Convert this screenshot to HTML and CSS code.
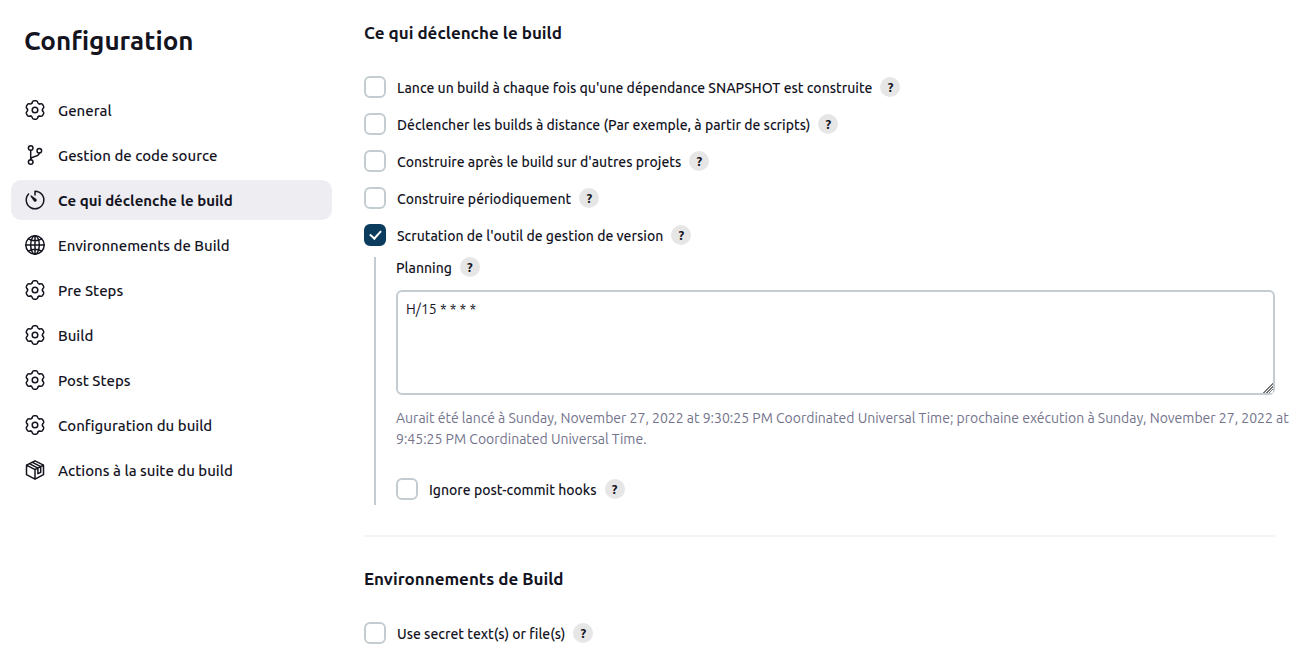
FILE: index.html
```
<!DOCTYPE html>
<html lang="fr">
<head>
<meta charset="utf-8">
<meta name="viewport" content="width=device-width, initial-scale=1">
<title>Configuration</title>
<link rel="stylesheet" href="styles.css">
</head>
<body>
<svg class="sprite" aria-hidden="true">
  <defs>
    <path id="tooth" d="M-3-7Q-2.4-9.3-1.2-9.3H1.2Q2.4-9.3 3-7Q3.45-5.98 4.56-6.1"/>
    <symbol id="gear" viewBox="-12 -12 24 24">
      <use href="#tooth"/>
      <use href="#tooth" transform="rotate(60)"/>
      <use href="#tooth" transform="rotate(120)"/>
      <use href="#tooth" transform="rotate(180)"/>
      <use href="#tooth" transform="rotate(240)"/>
      <use href="#tooth" transform="rotate(300)"/>
      <circle r="2.8"/>
    </symbol>
    <symbol id="branch" viewBox="0 0 24 24">
      <circle cx="7.7" cy="5" r="2.3"/><circle cx="7.7" cy="19" r="2.3"/><circle cx="16.3" cy="7.7" r="2.3"/>
      <path d="M7.7 7.3v9.4M16.3 10c0 4.6-8.600 2.600-8.600 6.700"/>
    </symbol>
    <symbol id="timer" viewBox="0 0 24 24">
      <path d="M12 7V3.200a8.800 8.800 0 1 1-6.400 2.800"/>
      <path class="solid" d="M8 7.300l5.300 3.600a1.600 1.600 0 1 1-2.400 2.300L7.300 8z"/>
    </symbol>
    <symbol id="globe" viewBox="0 0 24 24">
      <circle cx="12" cy="12" r="9.200"/><ellipse cx="12" cy="12" rx="4.300" ry="9.200"/>
      <path d="M12 2.800v18.400M2.800 12h18.400M5.500 5.900c3.500 2.400 9.500 2.400 13 0M5.500 18.100c3.500-2.400 9.500-2.400 13 0"/>
    </symbol>
    <symbol id="package" viewBox="0 0 24 24">
      <path d="M12 2.800l8.500 4.300v9.600L12 21.200l-8.500-4.500V7.100zM3.500 7.100l8.500 4.500 8.500-4.500M12 11.600v9.600M6.300 5.700l8.600 4.500v5.500l2.800-1.400V8.700L9.100 4.200"/>
    </symbol>
  </defs>
</svg>
<div class="page">
  <aside class="sidebar">
    <h1 class="sidebar-title">Configuration</h1>
    <nav class="nav">
      <a class="nav-link" href="#general"><svg class="icon"><use href="#gear"/></svg><span class="nav-text">General</span></a>
      <a class="nav-link" href="#scm"><svg class="icon"><use href="#branch"/></svg><span class="nav-text">Gestion de code source</span></a>
      <a class="nav-link nav-link-active" href="#triggers" aria-current="true"><svg class="icon"><use href="#timer"/></svg><span class="nav-text">Ce qui déclenche le build</span></a>
      <a class="nav-link" href="#environment"><svg class="icon"><use href="#globe"/></svg><span class="nav-text">Environnements de Build</span></a>
      <a class="nav-link" href="#pre-steps"><svg class="icon"><use href="#gear"/></svg><span class="nav-text">Pre Steps</span></a>
      <a class="nav-link" href="#build"><svg class="icon"><use href="#gear"/></svg><span class="nav-text">Build</span></a>
      <a class="nav-link" href="#post-steps"><svg class="icon"><use href="#gear"/></svg><span class="nav-text">Post Steps</span></a>
      <a class="nav-link" href="#build-config"><svg class="icon"><use href="#gear"/></svg><span class="nav-text">Configuration du build</span></a>
      <a class="nav-link" href="#post-build"><svg class="icon"><use href="#package"/></svg><span class="nav-text">Actions à la suite du build</span></a>
    </nav>
  </aside>
  <main class="main">
    <section class="section" id="triggers">
      <h2 class="section-title">Ce qui déclenche le build</h2>
      <div class="options">
        <div class="option"><input class="checkbox" type="checkbox" id="snapshot"><label class="label" for="snapshot">Lance un build à chaque fois qu'une dépendance SNAPSHOT est construite</label><button class="help" type="button">?</button></div>
        <div class="option"><input class="checkbox" type="checkbox" id="remote"><label class="label" for="remote">Déclencher les builds à distance (Par exemple, à partir de scripts)</label><button class="help" type="button">?</button></div>
        <div class="option"><input class="checkbox" type="checkbox" id="after"><label class="label" for="after">Construire après le build sur d'autres projets</label><button class="help" type="button">?</button></div>
        <div class="option"><input class="checkbox" type="checkbox" id="periodic"><label class="label" for="periodic">Construire périodiquement</label><button class="help" type="button">?</button></div>
        <div class="option"><input class="checkbox" type="checkbox" id="poll" checked><label class="label" for="poll">Scrutation de l'outil de gestion de version</label><button class="help" type="button">?</button></div>
      </div>
      <div class="nested">
        <div class="field-head"><label class="label" for="planning">Planning</label><button class="help" type="button">?</button></div>
        <textarea class="textarea" id="planning" spellcheck="false">H/15 * * * *</textarea>
        <p class="note">Aurait été lancé à Sunday, November 27, 2022 at 9:30:25 PM Coordinated Universal Time; prochaine exécution à Sunday, November 27, 2022 at 9:45:25 PM Coordinated Universal Time.</p>
        <div class="option"><input class="checkbox" type="checkbox" id="hooks"><label class="label" for="hooks">Ignore post-commit hooks</label><button class="help" type="button">?</button></div>
      </div>
    </section>
    <section class="section" id="environment">
      <h2 class="section-title">Environnements de Build</h2>
      <div class="options">
        <div class="option"><input class="checkbox" type="checkbox" id="secret"><label class="label" for="secret">Use secret text(s) or file(s)</label><button class="help" type="button">?</button></div>
      </div>
    </section>
  </main>
</div>
</body>
</html>
```
FILE: styles.css
```
* { box-sizing: border-box; }
body {
  margin: 0;
  background: #fff;
  color: #14141f;
  font-family: Ubuntu, "Noto Sans", sans-serif;
  font-size: 14px;
  line-height: 20px;
}
.sprite { position: absolute; width: 0; height: 0; }
.page {
  display: grid;
  grid-template-columns: 321px minmax(0, 1fr);
  gap: 32px;
  padding: 20px 30px 14px 11px;
}
.sidebar-title { margin: 5px 0 33px; padding-left: 13px; font-size: 26px; line-height: 32px; font-weight: 700; }
.nav { display: flex; flex-direction: column; gap: 5px; }
.nav-link {
  display: flex;
  align-items: center;
  gap: 11px;
  height: 40px;
  padding: 0 12px;
  border-radius: 10px;
  color: inherit;
  font-size: 15px;
  font-weight: 500;
  text-decoration: none;
}
.nav-link-active { background: #eeedf2; font-weight: 700; }
.nav-text { padding-top: 1px; }
.icon {
  flex: none;
  width: 24px;
  height: 24px;
  fill: none;
  stroke: #14141f;
  stroke-width: 1.5;
  stroke-linecap: round;
  stroke-linejoin: round;
}
.solid { fill: #14141f; stroke: none; }
.section-title { margin: 0; font-size: 17px; line-height: 26px; font-weight: 700; }
.options { display: flex; flex-direction: column; gap: 15px; margin-top: 30px; }
.option { display: flex; align-items: center; height: 22px; }
.checkbox {
  appearance: none;
  flex: none;
  display: grid;
  place-items: center;
  width: 22px;
  height: 22px;
  margin: 0 11px 0 0;
  border: 2px solid #c3ccd1;
  border-radius: 6px;
  background: #fff;
}
.checkbox:checked { border-color: #0b3c5d; background: #0b3c5d; }
.checkbox:checked::before {
  content: "";
  width: 5px;
  height: 9px;
  margin-bottom: 3px;
  border: solid #fff;
  border-width: 0 2px 2px 0;
  transform: rotate(42deg);
}
.label { padding-top: 2px; font-weight: 500; }
.help {
  flex: none;
  width: 20px;
  height: 20px;
  margin-left: 8px;
  padding: 0;
  border: 0;
  border-radius: 50%;
  background: #e6e6e6;
  color: #14141f;
  font: 700 13px/20px Ubuntu, sans-serif;
}
.nested { margin: 11px 0 0 10px; padding: 0 0 5px 20px; border-left: 2px solid #c3ccd1; }
.field-head { display: flex; align-items: center; height: 20px; }
.textarea {
  display: block;
  width: 100%;
  height: 105px;
  margin-top: 13px;
  padding: 7px 8px;
  border: 2px solid #c3ccd1;
  border-radius: 6px;
  color: inherit;
  font: inherit;
  resize: vertical;
}
.textarea::-webkit-resizer {
  background:
    linear-gradient(135deg, #fff 62%, transparent 62%),
    linear-gradient(135deg, transparent 92%, #fff 92%),
    repeating-linear-gradient(135deg, #777 0 1px, #fff 1px 2px);
}
.note { margin: 13px -16px 28px 0; color: #73738c; line-height: 21px; }
.section + .section { margin-top: 30px; padding-top: 29px; border-top: 2px solid #f3f3f8; }
```
